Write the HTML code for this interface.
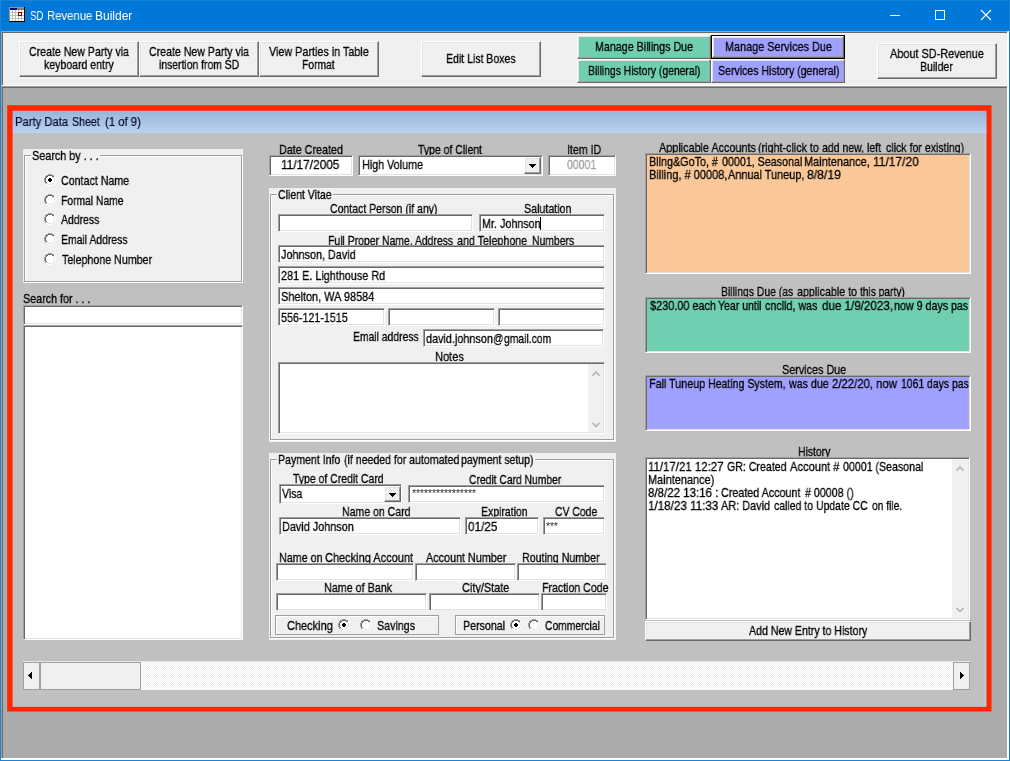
<!DOCTYPE html>
<html>
<head>
<meta charset="utf-8">
<title>SD Revenue Builder</title>
<style>
*{box-sizing:border-box;margin:0;padding:0}
html,body{width:1010px;height:761px;overflow:hidden;background:#ababab}
body{position:relative;font-family:"Liberation Sans",sans-serif;font-size:13px;color:#000}
.a{position:absolute}
.t{will-change:transform;-webkit-text-stroke-width:.3px;position:absolute;white-space:nowrap;line-height:15px;height:15px;transform:scaleX(.825);transform-origin:0 50%}
.btn{position:absolute;background:#f0f0f0;border-top:1px solid #fff;border-left:1px solid #fff;border-right:1px solid #696969;border-bottom:1px solid #696969;box-shadow:inset -1px -1px 0 #a0a0a0,inset 1px 1px 0 #e3e3e3}
.inp{position:absolute;background:#fff;border-top:1px solid #a0a0a0;border-left:1px solid #a0a0a0;border-right:1px solid #fff;border-bottom:1px solid #fff;box-shadow:inset 1px 1px 0 #696969,inset -1px -1px 0 #e3e3e3;overflow:hidden}
.grp{position:absolute;background:#f0f0f0}
.grp .ln{position:absolute;border:1px solid #a0a0a0;box-shadow:inset 1px 1px 0 #fff,1px 1px 0 #fff}
.grp .lg{position:absolute;background:#f0f0f0;height:15px;top:0}
.pnl{position:absolute;background:#f0f0f0;border:1px solid #a0a0a0;box-shadow:inset 1px 1px 0 #fff}
svg{position:absolute;overflow:visible}
.px{shape-rendering:crispEdges}
</style>
</head>
<body>
<svg width="0" height="0" style="left:0;top:0">
<defs>
<g id="rad" class="px">
<path fill="#fff" d="M2 2h8v1h1v6h-1v1h-8v-1h-1v-6h1z"/>
<path fill="#a0a0a0" d="M4 0h4v1h-4zM2 1h2v1h-2zM8 1h2v1h-2zM1 2h1v2h-1zM0 4h1v4h-1zM1 8h1v2h-1z"/>
<path fill="#696969" d="M4 1h4v1h-4zM2 2h2v1h-2zM8 2h2v1h-2zM2 3h1v1h-1zM1 4h1v4h-1zM2 8h1v1h-1z"/>
<path fill="#e3e3e3" d="M9 3h1v1h-1zM10 4h1v4h-1zM9 8h1v1h-1zM2 9h2v1h-2zM8 9h2v1h-2zM4 10h4v1h-4z"/>
<path fill="#fff" d="M10 2h1v2h-1zM11 4h1v4h-1zM10 8h1v2h-1zM2 10h2v1h-2zM8 10h2v1h-2zM4 11h4v1h-4z"/>
</g>
<g id="radon" class="px"><use href="#rad"/><path fill="#000" d="M5 4h2v1h1v2h-1v1h-2v-1h-1v-2h1z"/></g>
<path id="dda" class="px" fill="#000" d="M0 0h7v1h-1v1h-1v1h-1v1h-1v-1h-1v-1h-1v-1h-1z"/>
<path id="chu" fill="none" stroke="#b8b8b8" stroke-width="1.8" d="M.5 4.7L4 1L7.5 4.7"/>
<path id="chd" fill="none" stroke="#b8b8b8" stroke-width="1.8" d="M.5 .8L4 4.5L7.5 .8"/>
</defs>
</svg>

<!-- window frame -->
<div class="a" style="left:0;top:0;width:1010px;height:761px;background:#1883d7"></div>
<div class="a" style="left:1px;top:31px;width:1008px;height:729px;background:#fff"></div>
<div class="a" id="mdi" style="left:1px;top:86px;width:1006px;height:672px;background:#ababab;border-top:1px solid #a0a0a0;border-left:1px solid #a0a0a0;box-shadow:inset 1px 1px 0 #696969"></div>
<!-- title bar -->
<div class="a" style="left:1px;top:1px;width:1008px;height:30px;background:#0078d7"></div>
<svg class="px" width="16" height="15" style="left:9px;top:7px" viewBox="0 0 16 15">
<rect x="0" y="0" width="16" height="15" fill="#c0c0c0"/>
<rect x="0" y="0" width="15" height="1" fill="#a09088"/>
<rect x="0" y="0" width="1" height="14" fill="#a09890"/>
<rect x="1" y="1" width="7" height="2" fill="#000080"/>
<rect x="8" y="1" width="7" height="2" fill="#808080"/>
<g fill="#fff">
<rect x="1" y="3" width="2" height="2"/><rect x="4" y="3" width="2" height="2"/><rect x="7" y="3" width="2" height="2"/><rect x="10" y="3" width="2" height="2"/><rect x="13" y="3" width="2" height="2"/>
<rect x="1" y="6" width="2" height="2"/><rect x="4" y="6" width="2" height="2"/><rect x="7" y="6" width="2" height="2"/><rect x="10" y="6" width="2" height="2"/><rect x="13" y="6" width="2" height="2"/>
<rect x="1" y="9" width="2" height="2"/><rect x="4" y="9" width="2" height="2"/><rect x="7" y="9" width="2" height="2"/><rect x="10" y="9" width="2" height="2"/><rect x="13" y="9" width="2" height="2"/>
<rect x="1" y="12" width="2" height="2"/><rect x="4" y="12" width="2" height="2"/><rect x="7" y="12" width="2" height="2"/><rect x="10" y="12" width="2" height="2"/><rect x="13" y="12" width="2" height="2"/>
</g>
<path fill="#8b0000" d="M9 5h4v4h-4zM10 6v2h2v-2z" fill-rule="evenodd"/>
<rect x="15" y="0" width="1" height="15" fill="#000"/>
<rect x="0" y="14" width="16" height="1" fill="#000"/>
</svg>
<div class="t" style="left:30.10px;transform:scaleX(0.8065);top:9px;color:#fff;font-size:12px;-webkit-text-stroke-width:0">SD</div>
<div class="t" style="left:46.86px;transform:scaleX(0.9441);top:9px;color:#fff;font-size:12px;-webkit-text-stroke-width:0">Revenue</div>
<div class="t" style="left:94.91px;transform:scaleX(0.9931);top:9px;color:#fff;font-size:12px;-webkit-text-stroke-width:0">Builder</div>
<svg width="120" height="31" style="left:885px;top:0" viewBox="0 0 120 31" class="px">
<rect x="5" y="15" width="10" height="1" fill="#fff"/>
<rect x="50.5" y="10.5" width="9" height="9" fill="none" stroke="#fff" stroke-width="1"/>
<path d="M96 10L106 20M106 10L96 20" stroke="#fff" stroke-width="1.1" shape-rendering="geometricPrecision"/>
</svg>

<!-- toolbar -->
<div class="a" id="tool" style="left:1px;top:31px;width:1007px;height:55px;background:#f0f0f0;border-top:1px solid #a0a0a0;border-left:1px solid #a0a0a0;border-bottom:1px solid #fff;border-right:1px solid #fff;box-shadow:inset 1px 1px 0 #696969"></div>
<div class="btn" style="left:19px;top:41px;width:120px;height:36px"></div>
<div class="t" style="left:29.19px;transform:scaleX(0.8139);top:44px">Create New Party via</div>
<div class="t" style="left:44.19px;transform:scaleX(0.8105);top:57px">keyboard entry</div>
<div class="btn" style="left:139px;top:41px;width:120px;height:36px"></div>
<div class="t" style="left:149.34px;transform:scaleX(0.8143);top:44px">Create New Party via</div>
<div class="t" style="left:159.15px;transform:scaleX(0.7985);top:57px">insertion from SD</div>
<div class="btn" style="left:259px;top:41px;width:120px;height:36px"></div>
<div class="t" style="left:269.00px;transform:scaleX(0.8301);top:44px">View Parties in Table</div>
<div class="t" style="left:302.01px;transform:scaleX(0.7925);top:57px">Format</div>
<div class="btn" style="left:421px;top:41px;width:120px;height:36px"></div>
<div class="t" style="left:445.89px;transform:scaleX(0.8094);top:51px">Edit List Boxes</div>
<div class="btn" style="left:577px;top:35px;width:134px;height:24px;background:#70cfb0"></div>
<div class="t" style="left:594.98px;transform:scaleX(0.8221);top:39px">Manage Billings Due</div>
<div class="a" style="left:711px;top:35px;width:134px;height:24px;background:#000"></div>
<div class="btn" style="left:712px;top:36px;width:132px;height:22px;background:#a0a0ff"></div>
<div class="t" style="left:724.76px;transform:scaleX(0.8356);top:39px">Manage Services Due</div>
<div class="btn" style="left:577px;top:59px;width:134px;height:24px;background:#70cfb0"></div>
<div class="t" style="left:587.90px;transform:scaleX(0.7978);top:63px">Billings History (general)</div>
<div class="btn" style="left:711px;top:59px;width:134px;height:24px;background:#a0a0ff"></div>
<div class="t" style="left:717.99px;transform:scaleX(0.8121);top:63px">Services History (general)</div>
<div class="btn" style="left:877px;top:43px;width:120px;height:36px"></div>
<div class="t" style="left:890.01px;transform:scaleX(0.8385);top:46px">About SD-Revenue</div>
<div class="t" style="left:919.79px;transform:scaleX(0.8076);top:59px">Builder</div>

<!-- child window -->
<div class="a" id="hdr" style="left:11px;top:109px;width:977px;height:24px;background:linear-gradient(#98b6d9 2px,#b9d2ef)"></div>
<div class="a" id="body" style="left:11px;top:133px;width:975px;height:574px;background:#c0c0c0;border-right:1px solid #bcd2ee;border-bottom:1px solid #bcd2ee"></div>
<svg width="1010" height="761" style="left:0;top:0" viewBox="0 0 1010 761"><path fill="#ff2600" fill-rule="evenodd" d="M7.2 105.3H991.5V711.4H7.2zM12.6 110.8V706.7H986.6V110.8z"/></svg>
<div class="t" style="left:14.80px;transform:scaleX(0.9357);top:115px;font-size:12px;color:#0a0a30;-webkit-text-stroke-width:.2px">Party Data</div>
<div class="t" style="left:71.96px;transform:scaleX(0.8839);top:115px;font-size:12px;color:#0a0a30;-webkit-text-stroke-width:.2px">Sheet</div>
<div class="t" style="left:104.93px;transform:scaleX(0.9432);top:115px;font-size:12px;color:#0a0a30;-webkit-text-stroke-width:.2px">(1 of 9)</div>

<!-- groups -->
<div class="grp" style="left:23px;top:149px;width:220px;height:134px">
  <div class="ln" style="left:1px;top:6px;width:218px;height:127px"></div>
  <div class="lg" style="left:8px;width:69px"></div>
</div>
<div class="grp" style="left:269px;top:188px;width:347px;height:254px">
  <div class="ln" style="left:1px;top:6px;width:344px;height:246px"></div>
  <div class="lg" style="left:8px;width:56px"></div>
</div>
<div class="grp" style="left:269px;top:453px;width:347px;height:187px">
  <div class="ln" style="left:1px;top:6px;width:344px;height:179px"></div>
  <div class="lg" style="left:8px;width:258px"></div>
</div>

<!-- labels (drawn before inputs so inputs clip descenders) -->
<div class="t" style="left:32.08px;transform:scaleX(0.8317);top:148px">Search by . . .</div>
<div class="t" style="left:61.34px;transform:scaleX(0.8207);top:173px">Contact Name</div>
<div class="t" style="left:60.96px;transform:scaleX(0.7929);top:193px">Formal Name</div>
<div class="t" style="left:61.20px;transform:scaleX(0.8010);top:212px">Address</div>
<div class="t" style="left:60.95px;transform:scaleX(0.8012);top:232px">Email Address</div>
<div class="t" style="left:62.25px;transform:scaleX(0.8200);top:252px">Telephone Number</div>
<div class="t" style="left:23.09px;transform:scaleX(0.8255);top:291px">Search for . . .</div>

<div class="t" style="left:278.87px;transform:scaleX(0.8277);top:142px">Date Created</div>
<div class="t" style="left:418.20px;transform:scaleX(0.8050);top:142px">Type of Client</div>
<div class="t" style="left:566.59px;transform:scaleX(0.8148);top:142px">Item ID</div>
<div class="t" style="left:278.20px;transform:scaleX(0.8092);top:187px">Client Vitae</div>
<div class="t" style="left:330.40px;transform:scaleX(0.8083);top:201px">Contact Person (if any)</div>
<div class="t" style="left:524.29px;transform:scaleX(0.8211);top:201px">Salutation</div>
<div class="t" style="left:327.70px;transform:scaleX(0.8032);top:233px">Full Proper</div>
<div class="t" style="left:382.30px;transform:scaleX(0.8000);top:233px">Name, Address</div>
<div class="t" style="left:457.29px;transform:scaleX(0.8249);top:233px">and Telephone</div>
<div class="t" style="left:531.60px;transform:scaleX(0.7981);top:233px">Numbers</div>
<div class="t" style="left:352.80px;transform:scaleX(0.7975);top:329px">Email address</div>
<div class="t" style="left:434.55px;transform:scaleX(0.8489);top:349px">Notes</div>
<div class="t" style="left:277.99px;transform:scaleX(0.8133);top:452px">Payment Info</div>
<div class="t" style="left:343.59px;transform:scaleX(0.8132);top:452px">(if needed for</div>
<div class="t" style="left:408.59px;transform:scaleX(0.8199);top:452px">automated</div>
<div class="t" style="left:461.29px;transform:scaleX(0.8091);top:452px">payment setup)</div>
<div class="t" style="left:292.50px;transform:scaleX(0.8036);top:471px">Type of Credit Card</div>
<div class="t" style="left:469.00px;transform:scaleX(0.7931);top:472px">Credit Card Number</div>
<div class="t" style="left:341.99px;transform:scaleX(0.8108);top:504px">Name on Card</div>
<div class="t" style="left:481.09px;transform:scaleX(0.8071);top:504px">Expiration</div>
<div class="t" style="left:555.40px;transform:scaleX(0.8000);top:504px">CV Code</div>
<div class="t" style="left:278.87px;transform:scaleX(0.8275);top:550px">Name on</div>
<div class="t" style="left:325.08px;transform:scaleX(0.8463);top:550px">Checking Account</div>
<div class="t" style="left:426.01px;transform:scaleX(0.8299);top:550px">Account Number</div>
<div class="t" style="left:521.68px;transform:scaleX(0.8203);top:550px">Routing Number</div>
<div class="t" style="left:323.77px;transform:scaleX(0.8270);top:580px">Name of Bank</div>
<div class="t" style="left:462.18px;transform:scaleX(0.8396);top:580px">City/State</div>
<div class="t" style="left:541.99px;transform:scaleX(0.8137);top:580px">Fraction Code</div>

<div class="t" style="left:658.51px;transform:scaleX(0.8327);top:140px">Applicable Accounts</div>
<div class="t" style="left:758.39px;transform:scaleX(0.8261);top:140px">(right-click to</div>
<div class="t" style="left:821.50px;transform:scaleX(0.8083);top:140px">add new, left</div>
<div class="t" style="left:885.60px;transform:scaleX(0.8136);top:140px">click for existing)</div>
<div class="t" style="left:721.00px;transform:scaleX(0.8000);top:284px">Billings Due (as</div>
<div class="t" style="left:796.79px;transform:scaleX(0.8222);top:284px">applicable to</div>
<div class="t" style="left:860.10px;transform:scaleX(0.7841);top:284px">this party)</div>
<div class="t" style="left:781.98px;transform:scaleX(0.8314);top:362px">Services Due</div>
<div class="t" style="left:797.90px;transform:scaleX(0.8000);top:444px">History</div>

<!-- left column controls -->
<svg width="12" height="12" style="left:44px;top:174px"><use href="#radon"/></svg>
<svg width="12" height="12" style="left:44px;top:194px"><use href="#rad"/></svg>
<svg width="12" height="12" style="left:44px;top:213px"><use href="#rad"/></svg>
<svg width="12" height="12" style="left:44px;top:233px"><use href="#rad"/></svg>
<svg width="12" height="12" style="left:44px;top:253px"><use href="#rad"/></svg>
<div class="inp" style="left:23px;top:305px;width:220px;height:20px"></div>
<div class="inp" style="left:23px;top:325px;width:220px;height:315px"></div>

<!-- middle column controls -->
<div class="inp" style="left:269px;top:155px;width:84px;height:21px"></div>
<div class="t" style="left:281.12px;transform:scaleX(0.9111);top:157px">11/17/2005</div>
<div class="inp" style="left:358px;top:155px;width:185px;height:21px"></div>
<div class="t" style="left:361.67px;transform:scaleX(0.8277);top:157px">High Volume</div>
<div class="btn" style="left:524px;top:157px;width:17px;height:17px"></div>
<svg width="7" height="4" style="left:529px;top:164px"><use href="#dda"/></svg>
<div class="inp" style="left:548px;top:155px;width:68px;height:21px"></div>
<div class="t" style="left:567.20px;transform:scaleX(0.8056);top:157px;color:#a0a0a0">00001</div>

<div class="inp" style="left:278px;top:214px;width:195px;height:18px"></div>
<div class="inp" style="left:479px;top:214px;width:126px;height:18px"></div>
<div class="t" style="left:481.57px;transform:scaleX(0.8289);top:216px">Mr. Johnson</div>
<div class="a" style="left:540px;top:217px;width:1px;height:13px;background:#000"></div>
<div class="inp" style="left:278px;top:245px;width:327px;height:18px"></div>
<div class="t" style="left:281.20px;transform:scaleX(0.8337);top:247px">Johnson, David</div>
<div class="inp" style="left:278px;top:266px;width:327px;height:18px"></div>
<div class="t" style="left:281.08px;transform:scaleX(0.8331);top:268px">281 E. Lighthouse Rd</div>
<div class="inp" style="left:278px;top:287px;width:327px;height:18px"></div>
<div class="t" style="left:281.08px;transform:scaleX(0.8418);top:289px">Shelton, WA 98584</div>
<div class="inp" style="left:278px;top:308px;width:107px;height:18px"></div>
<div class="t" style="left:281.09px;transform:scaleX(0.8237);top:310px">556-121-1515</div>
<div class="inp" style="left:388px;top:308px;width:107px;height:18px"></div>
<div class="inp" style="left:498px;top:308px;width:107px;height:18px"></div>
<div class="inp" style="left:423px;top:329px;width:181px;height:18px"></div>
<div class="t" style="left:426.29px;transform:scaleX(0.8341);top:331px">david.johnson</div>
<div class="t" style="left:492.71px;transform:scaleX(0.7913);top:331px">@</div>
<div class="t" style="left:503.60px;transform:scaleX(0.7948);top:331px">gmail.com</div>
<div class="inp" style="left:278px;top:362px;width:327px;height:72px"></div>
<div class="a" style="left:588px;top:364px;width:15px;height:68px;background:#f0f0f0"></div>
<svg width="8" height="5" style="left:592px;top:371px"><use href="#chu"/></svg>
<svg width="8" height="5" style="left:592px;top:422px"><use href="#chd"/></svg>

<div class="inp" style="left:279px;top:484px;width:123px;height:20px"></div>
<div class="t" style="left:281.80px;transform:scaleX(0.8119);top:486px">Visa</div>
<div class="btn" style="left:384px;top:486px;width:17px;height:16px"></div>
<svg width="7" height="4" style="left:389px;top:493px"><use href="#dda"/></svg>
<div class="inp" style="left:408px;top:485px;width:197px;height:18px"></div>
<div class="t" style="left:411.67px;transform:scaleX(0.9324);top:486px;font-size:11px;-webkit-text-stroke-width:0;color:#222">****************</div>
<div class="inp" style="left:279px;top:517px;width:182px;height:18px"></div>
<div class="t" style="left:281.86px;transform:scaleX(0.8356);top:519px">David Johnson</div>
<div class="inp" style="left:465px;top:517px;width:74px;height:18px"></div>
<div class="t" style="left:468.27px;transform:scaleX(0.9031);top:519px">01/25</div>
<div class="inp" style="left:543px;top:517px;width:62px;height:18px"></div>
<div class="t" style="left:546.37px;transform:scaleX(0.9280);top:519px;font-size:11px;-webkit-text-stroke-width:0;color:#222">***</div>
<div class="inp" style="left:276px;top:563px;width:138px;height:18px"></div>
<div class="inp" style="left:415px;top:563px;width:101px;height:18px"></div>
<div class="inp" style="left:517px;top:563px;width:90px;height:18px"></div>
<div class="inp" style="left:276px;top:593px;width:151px;height:17px;border-bottom:0"></div>
<div class="inp" style="left:429px;top:593px;width:111px;height:17px;border-bottom:0"></div>
<div class="inp" style="left:541px;top:593px;width:66px;height:17px;border-bottom:0"></div>
<div class="pnl" style="left:275px;top:615px;width:164px;height:20px"></div>
<div class="t" style="left:287.08px;transform:scaleX(0.8453);top:618px">Checking</div>
<svg width="12" height="12" style="left:338px;top:619px"><use href="#radon"/></svg>
<svg width="12" height="12" style="left:360px;top:619px"><use href="#rad"/></svg>
<div class="t" style="left:377.29px;transform:scaleX(0.8220);top:618px">Savings</div>
<div class="pnl" style="left:455px;top:615px;width:150px;height:20px"></div>
<div class="t" style="left:462.68px;transform:scaleX(0.8181);top:618px">Personal</div>
<svg width="12" height="12" style="left:510px;top:619px"><use href="#radon"/></svg>
<svg width="12" height="12" style="left:528px;top:619px"><use href="#rad"/></svg>
<div class="t" style="left:545.10px;transform:scaleX(0.7912);top:618px">Commercial</div>

<!-- right column controls -->
<div class="inp" style="left:645px;top:153px;width:326px;height:121px;background:#fac898"></div>
<div class="t" style="left:649.07px;transform:scaleX(0.8292);top:154px">Bllng&amp;GoTo, #</div>
<div class="t" style="left:721.59px;transform:scaleX(0.8227);top:154px">00001, Seasonal</div>
<div class="t" style="left:804.16px;transform:scaleX(0.8421);top:154px">Maintenance,</div>
<div class="t" style="left:872.91px;transform:scaleX(0.9216);top:154px">11/17/20</div>
<div class="t" style="left:649.05px;transform:scaleX(0.8464);top:167px">Billing, # 00008,</div>
<div class="t" style="left:728.41px;transform:scaleX(0.8388);top:167px">Annual Tuneup,</div>
<div class="t" style="left:807.43px;transform:scaleX(0.9362);top:167px">8/8/19</div>
<div class="inp" style="left:645px;top:297px;width:326px;height:56px;background:#70cfb0"></div>
<div class="t" style="left:649.90px;transform:scaleX(0.8383);top:298px">$230.00 each</div>
<div class="t" style="left:718.10px;transform:scaleX(0.8094);top:298px">Year until</div>
<div class="t" style="left:765.49px;transform:scaleX(0.8254);top:298px">cnclld, was</div>
<div class="t" style="left:821.68px;transform:scaleX(0.8920);top:298px">due 1/9/2023,</div>
<div class="t" style="left:894.18px;transform:scaleX(0.8232);top:298px">now 9 days</div>
<div class="t" style="left:951.39px;transform:scaleX(0.8100);top:298px">pas</div>
<div class="inp" style="left:645px;top:375px;width:326px;height:56px;background:#a0a0ff"></div>
<div class="t" style="left:649.07px;transform:scaleX(0.8271);top:376px">Fall Tuneup</div>
<div class="t" style="left:708.29px;transform:scaleX(0.8128);top:376px">Heating System,</div>
<div class="t" style="left:789.00px;transform:scaleX(0.8187);top:376px">was due</div>
<div class="t" style="left:831.56px;transform:scaleX(0.8727);top:376px">2/22/20, now</div>
<div class="t" style="left:901.20px;transform:scaleX(0.8000);top:376px">1061 days</div>
<div class="t" style="left:952.10px;transform:scaleX(0.7950);top:376px">pas</div>
<div class="inp" style="left:645px;top:457px;width:325px;height:163px"></div>
<div class="a" style="left:952px;top:459px;width:16px;height:159px;background:#f0f0f0"></div>
<svg width="8" height="5" style="left:955.5px;top:465.5px"><use href="#chu"/></svg>
<svg width="8" height="5" style="left:955.5px;top:606.5px"><use href="#chd"/></svg>
<div class="t" style="left:648.34px;transform:scaleX(0.8805);top:459px">11/17/21 12:27</div>
<div class="t" style="left:727.29px;transform:scaleX(0.8153);top:459px">GR: Created</div>
<div class="t" style="left:789.61px;transform:scaleX(0.8549);top:459px">Account #</div>
<div class="t" style="left:842.90px;transform:scaleX(0.8164);top:459px">00001 (Seasonal</div>
<div class="t" style="left:647.56px;transform:scaleX(0.8414);top:472px">Maintenance)</div>
<div class="t" style="left:648.26px;transform:scaleX(0.8846);top:485px">8/8/22 13:16 :</div>
<div class="t" style="left:721.39px;transform:scaleX(0.8261);top:485px">Created Account</div>
<div class="t" style="left:805.01px;transform:scaleX(0.8203);top:485px"># 00008 ()</div>
<div class="t" style="left:648.03px;transform:scaleX(0.8955);top:498px">1/18/23 11:33</div>
<div class="t" style="left:721.31px;transform:scaleX(0.8378);top:498px">AR: David</div>
<div class="t" style="left:774.20px;transform:scaleX(0.8042);top:498px">called to</div>
<div class="t" style="left:816.40px;transform:scaleX(0.8032);top:498px">Update CC</div>
<div class="t" style="left:871.80px;transform:scaleX(0.7865);top:498px">on file.</div>
<div class="btn" style="left:645px;top:621px;width:326px;height:20px"></div>
<div class="t" style="left:749.00px;transform:scaleX(0.8144);top:623px">Add New Entry to History</div>

<!-- bottom scrollbar -->
<div class="a" style="left:23px;top:661px;width:947px;height:29px;background:repeating-conic-gradient(#fff 0 25%,#f0f0f0 0 50%) 0 0/2px 2px;border-top:1px solid #e8e8e8"></div>
<div class="a" style="left:23px;top:662px;width:17px;height:28px;background:#f0f0f0;border:1px solid #a0a0a0"></div>
<svg class="px" width="4" height="7" style="left:28px;top:672px"><path d="M4 0v7h-1v-1h-1v-1h-1v-1h-1v-1h1v-1h1v-1h1v-1z" fill="#000"/></svg>
<div class="a" style="left:40px;top:662px;width:101px;height:28px;background:#f0f0f0;border:1px solid #a0a0a0"></div>
<div class="a" style="left:953px;top:662px;width:17px;height:28px;background:#f0f0f0;border:1px solid #a0a0a0"></div>
<svg class="px" width="4" height="7" style="left:960px;top:672px"><path d="M0 0v7h1v-1h1v-1h1v-1h1v-1h-1v-1h-1v-1h-1v-1z" fill="#000"/></svg>

</body>
</html>
